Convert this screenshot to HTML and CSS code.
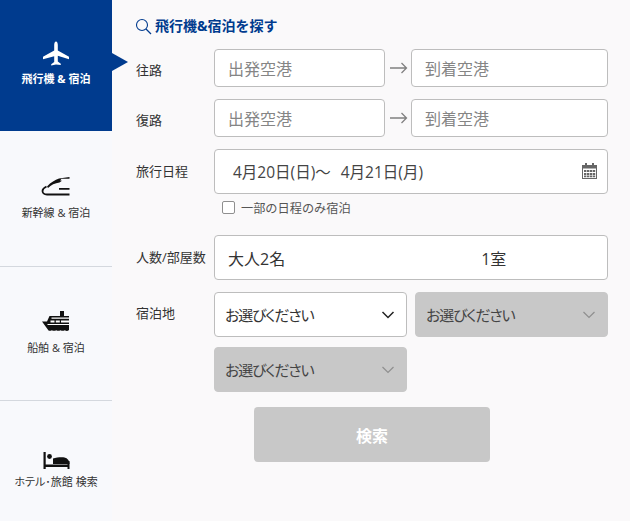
FILE: index.html
```html
<!DOCTYPE html>
<html lang="ja">
<head>
  <meta charset="utf-8">
  <title>飛行機&宿泊を探す</title>
  <link rel="stylesheet" href="styles.css">
</head>
<body>
  <div class="page">
    <nav class="side">
      <div class="tab tab-active">
        <svg class="tab-icon" width="28" height="25" viewBox="0 0 28 25"><path fill="#fff" d="M14 0.500c1.100 0 1.800 1.700 1.800 3.500v5.500L27 15.800v2.400l-11.200-3.400v5.700l3 2.200v1.400L14 23.500 9.200 24.600v-1.400l3-2.200v-5.700L1 18.200v-2.400l11.200-6.300V4c0-1.800.7-3.500 1.800-3.500z"/></svg>
        <span>飛行機 &amp; 宿泊</span>
      </div>
      <div class="tab tab-train">
        <svg class="tab-icon" width="30" height="20" viewBox="0 0 30 20"><path fill="none" stroke="#111" stroke-width="1.800" d="M28.500 18.500H6C2.800 18.500 1.500 16.500 1.500 15c0-1.800 1.500-3.200 4-4.500"/><path fill="#111" d="M6 10.500C10 6 14 4 18 2.500L28.500 1v1.800h-8l-1.300 1.700 1.800.2-2.500 1.800C14 7 10 9 7 12zM18 12h10.500v1.800H18z"/></svg>
        <span>新幹線 &amp; 宿泊</span>
      </div>
      <div class="tab tab-ship">
        <svg class="tab-icon" width="28" height="21" viewBox="0 0 28 21"><path fill="#111" d="M18 0h4v5h5v14c-1.800 1.500-2.800.9-4.200.2-1.400.8-2.900.8-4.300 0-1.400.8-2.900.8-4.300 0-1.400.8-2.900.8-4.300 0-1.400.6-2.400.8-3.400.2L0 10.500h5L7.500 5H18z"/><path fill="#fff" d="M9.500 6.500H27v1.200H9.500zM8.500 9.500h4v2h-4zM13.800 9.500h4v2h-4zM19 9.500h8v2h-8zM5.500 13h21.500v.9H5.500z"/></svg>
        <span>船舶 &amp; 宿泊</span>
      </div>
      <div class="tab tab-hotel">
        <svg class="tab-icon" width="27" height="17" viewBox="0 0 27 17"><path fill="#111" d="M0.500 0h2.200v17H0.500zM24.500 9H26.500v8h-2zM2.700 12.500h22v2.500h-22z"/><circle fill="#111" cx="6.500" cy="4.500" r="2.400"/><path fill="#111" d="M10 6.500c3.500-1 8.500-1.700 11.500-1 3 .7 5 3 5 6V12H10z"/></svg>
        <span>ホテル･旅館 検索</span>
      </div>
    </nav>

    <main class="form">
      <h2 class="title">
        <svg width="17" height="17" viewBox="0 0 17 17"><circle cx="7" cy="7" r="5.500" fill="none" stroke="#003b8e" stroke-width="1.100"/><path d="M11 11l5 5" stroke="#003b8e" stroke-width="1.200"/></svg>
        飛行機&amp;宿泊を探す
      </h2>

      <div class="row row-route">
        <label class="label">往路</label>
        <div class="box box-place ph">出発空港</div>
        <svg class="arrow" width="18" height="12" viewBox="0 0 18 12"><path d="M0 6h16.500M11.500 1l5 5-5 5" fill="none" stroke="#808080" stroke-width="1.300"/></svg>
        <div class="box box-grow ph">到着空港</div>
      </div>

      <div class="row row-route">
        <label class="label">復路</label>
        <div class="box box-place ph">出発空港</div>
        <svg class="arrow" width="18" height="12" viewBox="0 0 18 12"><path d="M0 6h16.500M11.500 1l5 5-5 5" fill="none" stroke="#808080" stroke-width="1.300"/></svg>
        <div class="box box-grow ph">到着空港</div>
      </div>

      <div class="row row-date">
        <label class="label">旅行日程</label>
        <div class="box box-grow box-date">
          <span>4月20日(日)～<span class="date-to">4月21日(月)</span></span>
          <svg width="15" height="16" viewBox="0 0 15 16"><path fill="#666" d="M0 2h3V0h2v2h5V0h2v2h3v14H0z"/><path fill="#fff" d="M1 5.500h13v9.500H1z"/><path fill="#666" d="M2 7h2.400v2H2zM5 7h2.400v2H5zM8 7h2.400v2H8zM11 7h2.200v2H11zM2 10h2.400v2H2zM5 10h2.400v2H5zM8 10h2.400v2H8zM11 10h2.200v2H11zM2 12.600h2.400v1.700H2zM5 12.600h2.400v1.700H5zM8 12.600h2.400v1.700H8zM11 12.600h2.200v1.700H11z"/></svg>
        </div>
      </div>

      <div class="partial">
        <span class="check"></span>
        <span>一部の日程のみ宿泊</span>
      </div>

      <div class="row row-people">
        <label class="label">人数/部屋数</label>
        <div class="box box-grow box-people">
          <span>大人2名</span>
          <span class="rooms">1室</span>
        </div>
      </div>

      <div class="row row-stay">
        <label class="label">宿泊地</label>
        <div class="selects">
          <div class="sel">
            <span>お選びください</span>
            <svg width="14" height="8" viewBox="0 0 14 8"><path d="M1.500 1l5.500 5.500L12.500 1" fill="none" stroke="#222" stroke-width="1.500"/></svg>
          </div>
          <div class="sel sel-off">
            <span>お選びください</span>
            <svg width="14" height="8" viewBox="0 0 14 8"><path d="M1.500 1l5.500 5.500L12.500 1" fill="none" stroke="#8f8f8f" stroke-width="1.200"/></svg>
          </div>
          <div class="sel sel-off">
            <span>お選びください</span>
            <svg width="14" height="8" viewBox="0 0 14 8"><path d="M1.500 1l5.500 5.500L12.500 1" fill="none" stroke="#8f8f8f" stroke-width="1.200"/></svg>
          </div>
        </div>
      </div>

      <button class="search">検索</button>
    </main>
  </div>
</body>
</html>
```

FILE: styles.css
```css
* { box-sizing: border-box; }
html, body { margin: 0; height: 100%; }
body { font-family: "Open Sans", "Noto Sans CJK JP", sans-serif; color: #333; background: #faf9fa; overflow: hidden; }

.page { display: flex; width: 630px; height: 521px; }

.side { width: 112px; flex: none; display: flex; flex-direction: column; background: #f8f9fc; }
.tab { display: flex; flex-direction: column; align-items: center; font-size: 11px; line-height: 14px; color: #333; position: relative; }
.tab + .tab { border-top: 1px solid #d4d8de; }
.tab-icon { display: block; }
.tab-active { height: 131px; background: #003b8e; color: #fff; font-weight: 700; padding-top: 41px; }
.tab-active::after { content: ""; position: absolute; left: 112px; top: 53px; border-left: 16px solid #003b8e; border-top: 9.500px solid transparent; border-bottom: 9.500px solid transparent; }
.tab-active span { margin-top: 6px; }
.tab-train { height: 135px; border-top: 0 !important; padding-top: 45px; }
.tab-train span { margin-top: 10px; }
.tab-ship { height: 134px; padding-top: 44px; }
.tab-ship span { margin-top: 9px; }
.tab-hotel { flex: 1; padding-top: 51px; }
.tab-hotel span { margin-top: 6px; font-feature-settings: "palt"; }

.form { flex: 1; padding: 16px 22px 0 24px; }
.title { display: flex; align-items: center; gap: 3px; margin: 0 0 13px -1px; height: 20px; font-size: 14px; line-height: 20px; font-weight: 700; color: #003b8e; }

.row { display: flex; align-items: center; }
.label { width: 78px; flex: none; font-size: 13px; color: #333; }
.box { height: 38px; background: #fff; border: 1px solid #bdbdbd; border-radius: 4px; display: flex; align-items: center; font-size: 16px; }
.box-place { width: 171px; flex: none; }
.box-grow { flex: 1; }
.ph { padding-left: 13px; color: #858585; }
.arrow { margin: 0 3px 0 5px; flex: none; }

.row-route { margin-bottom: 12px; }
.row-route .label { padding-top: 2px; }
.row-date { margin-bottom: 7px; }
.row-date .label { padding-bottom: 3px; }
.box-date { height: 45px; padding: 0 10px 0 18px; justify-content: space-between; font-size: 15.500px; color: #444; }
.box-date svg { flex: none; margin-top: -1px; }
.date-to { margin-left: 10px; }

.partial { display: flex; align-items: center; gap: 6px; margin: 0 0 21px 86px; height: 13px; font-size: 12.200px; color: #555; }
.check { width: 13px; height: 13px; background: #fff; border: 1px solid #8f8f8f; border-radius: 2px; }

.row-people { margin-bottom: 12px; }
.row-people .label { padding-bottom: 3px; }
.box-people { height: 45px; padding: 0 13px; font-size: 16px; color: #333; }
.rooms { margin-left: 196px; }

.row-stay { align-items: flex-start; }
.row-stay .label { padding-top: 11px; }
.selects { flex: 1; display: grid; grid-template-columns: 193px 193px; column-gap: 8px; row-gap: 10px; }
.sel { height: 45px; display: flex; align-items: center; justify-content: space-between; padding: 0 11px 0 10px; background: #fff; border: 1px solid #bdbdbd; border-radius: 4px; font-size: 15px; letter-spacing: -1.200px; color: #333; font-feature-settings: "palt"; }
.sel-off { background: #c8c8c8; border-color: #c8c8c8; color: #444; }

.search { display: block; width: 236px; height: 55px; margin: 15px 0 0 118px; background: #c8c8c8; border: 0; border-radius: 4px; color: #fff; font: 700 16px "Open Sans", "Noto Sans CJK JP", sans-serif; }
```
